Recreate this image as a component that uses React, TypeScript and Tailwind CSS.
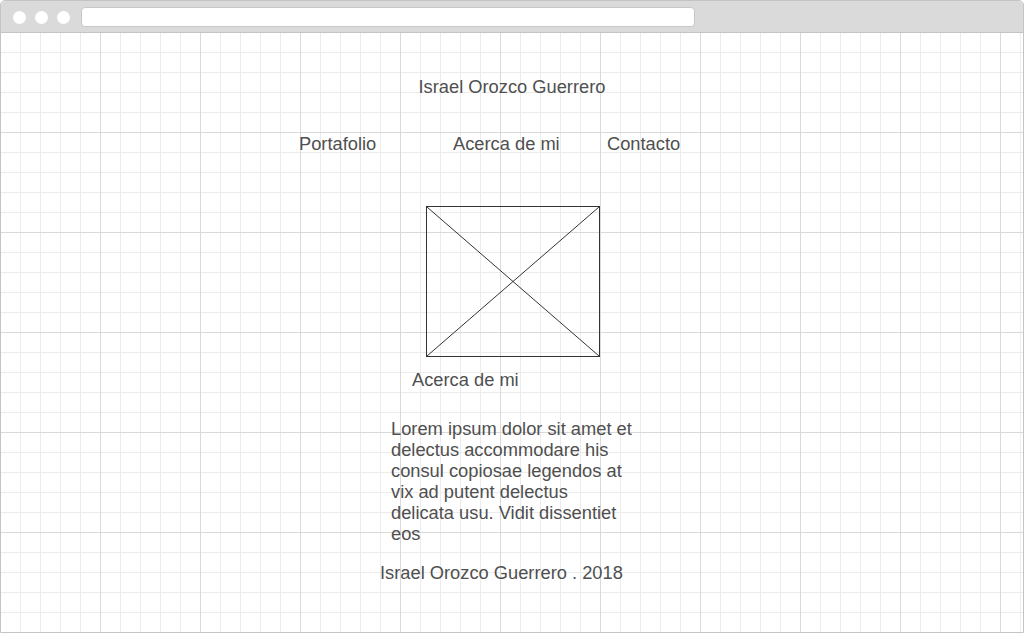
import React from "react";

const navItems = ["Portafolio", "Acerca de mi", "Contacto"];

const loremLines = [
  "Lorem ipsum dolor sit amet et",
  "delectus accommodare his",
  "consul copiosae legendos at",
  "vix ad putent delectus",
  "delicata usu. Vidit dissentiet",
  "eos",
];

export default function App() {
  return (
    <div className="w-[1025px] h-[636px] bg-white font-['Liberation_Sans',Arial,sans-serif] text-[#4f4f4f]">
      <div className="w-[1024px] h-[633px] border border-[#c4c4c4] rounded-t-[5px] overflow-hidden flex flex-col">
        {/* browser chrome */}
        <div className="h-[32px] shrink-0 bg-[#dadada] border-b border-[#c4c4c4] flex items-center pl-[12px] pt-[1px]">
          <div className="flex gap-[9px]">
            <span className="w-[13px] h-[13px] rounded-full bg-white" />
            <span className="w-[13px] h-[13px] rounded-full bg-white" />
            <span className="w-[13px] h-[13px] rounded-full bg-white" />
          </div>
          <div className="ml-[11px] w-[614px] h-[20px] bg-white border border-[#c8c8c8] rounded-[4px]" />
        </div>

        {/* page canvas */}
        <div className="flex-1 flex flex-col text-[18.3px] leading-[21px] pt-[43px] bg-[linear-gradient(to_right,transparent_99px,#d9d9d9_99px),linear-gradient(to_bottom,transparent_99px,#d9d9d9_99px),linear-gradient(to_right,transparent_19px,#ececec_19px),linear-gradient(to_bottom,transparent_19px,#ececec_19px)] bg-[size:100px_100px,100px_100px,20px_20px,20px_20px]">
          <h1 className="text-center">Israel Orozco Guerrero</h1>

          <nav className="mt-[36px] pl-[298px] flex">
            {navItems.map((item) => (
              <span key={item} className="w-[154px]">
                {item}
              </span>
            ))}
          </nav>

          <div className="mt-[52px] ml-[425px] w-[174px] h-[151px] border border-[#333]">
            <svg className="w-full h-full block" viewBox="0 0 172 149" preserveAspectRatio="none">
              <line x1="0" y1="0" x2="172" y2="149" stroke="#333" strokeWidth="1" />
              <line x1="172" y1="0" x2="0" y2="149" stroke="#333" strokeWidth="1" />
            </svg>
          </div>

          <p className="mt-[12px] ml-[411px]">Acerca de mi</p>

          <p className="mt-[28px] ml-[390px] whitespace-nowrap">
            {loremLines.map((line, i) => (
              <React.Fragment key={i}>
                {line}
                {i < loremLines.length - 1 && <br />}
              </React.Fragment>
            ))}
          </p>

          <p className="mt-[18px] ml-[379px]">Israel Orozco Guerrero . 2018</p>
        </div>
      </div>
    </div>
  );
}
